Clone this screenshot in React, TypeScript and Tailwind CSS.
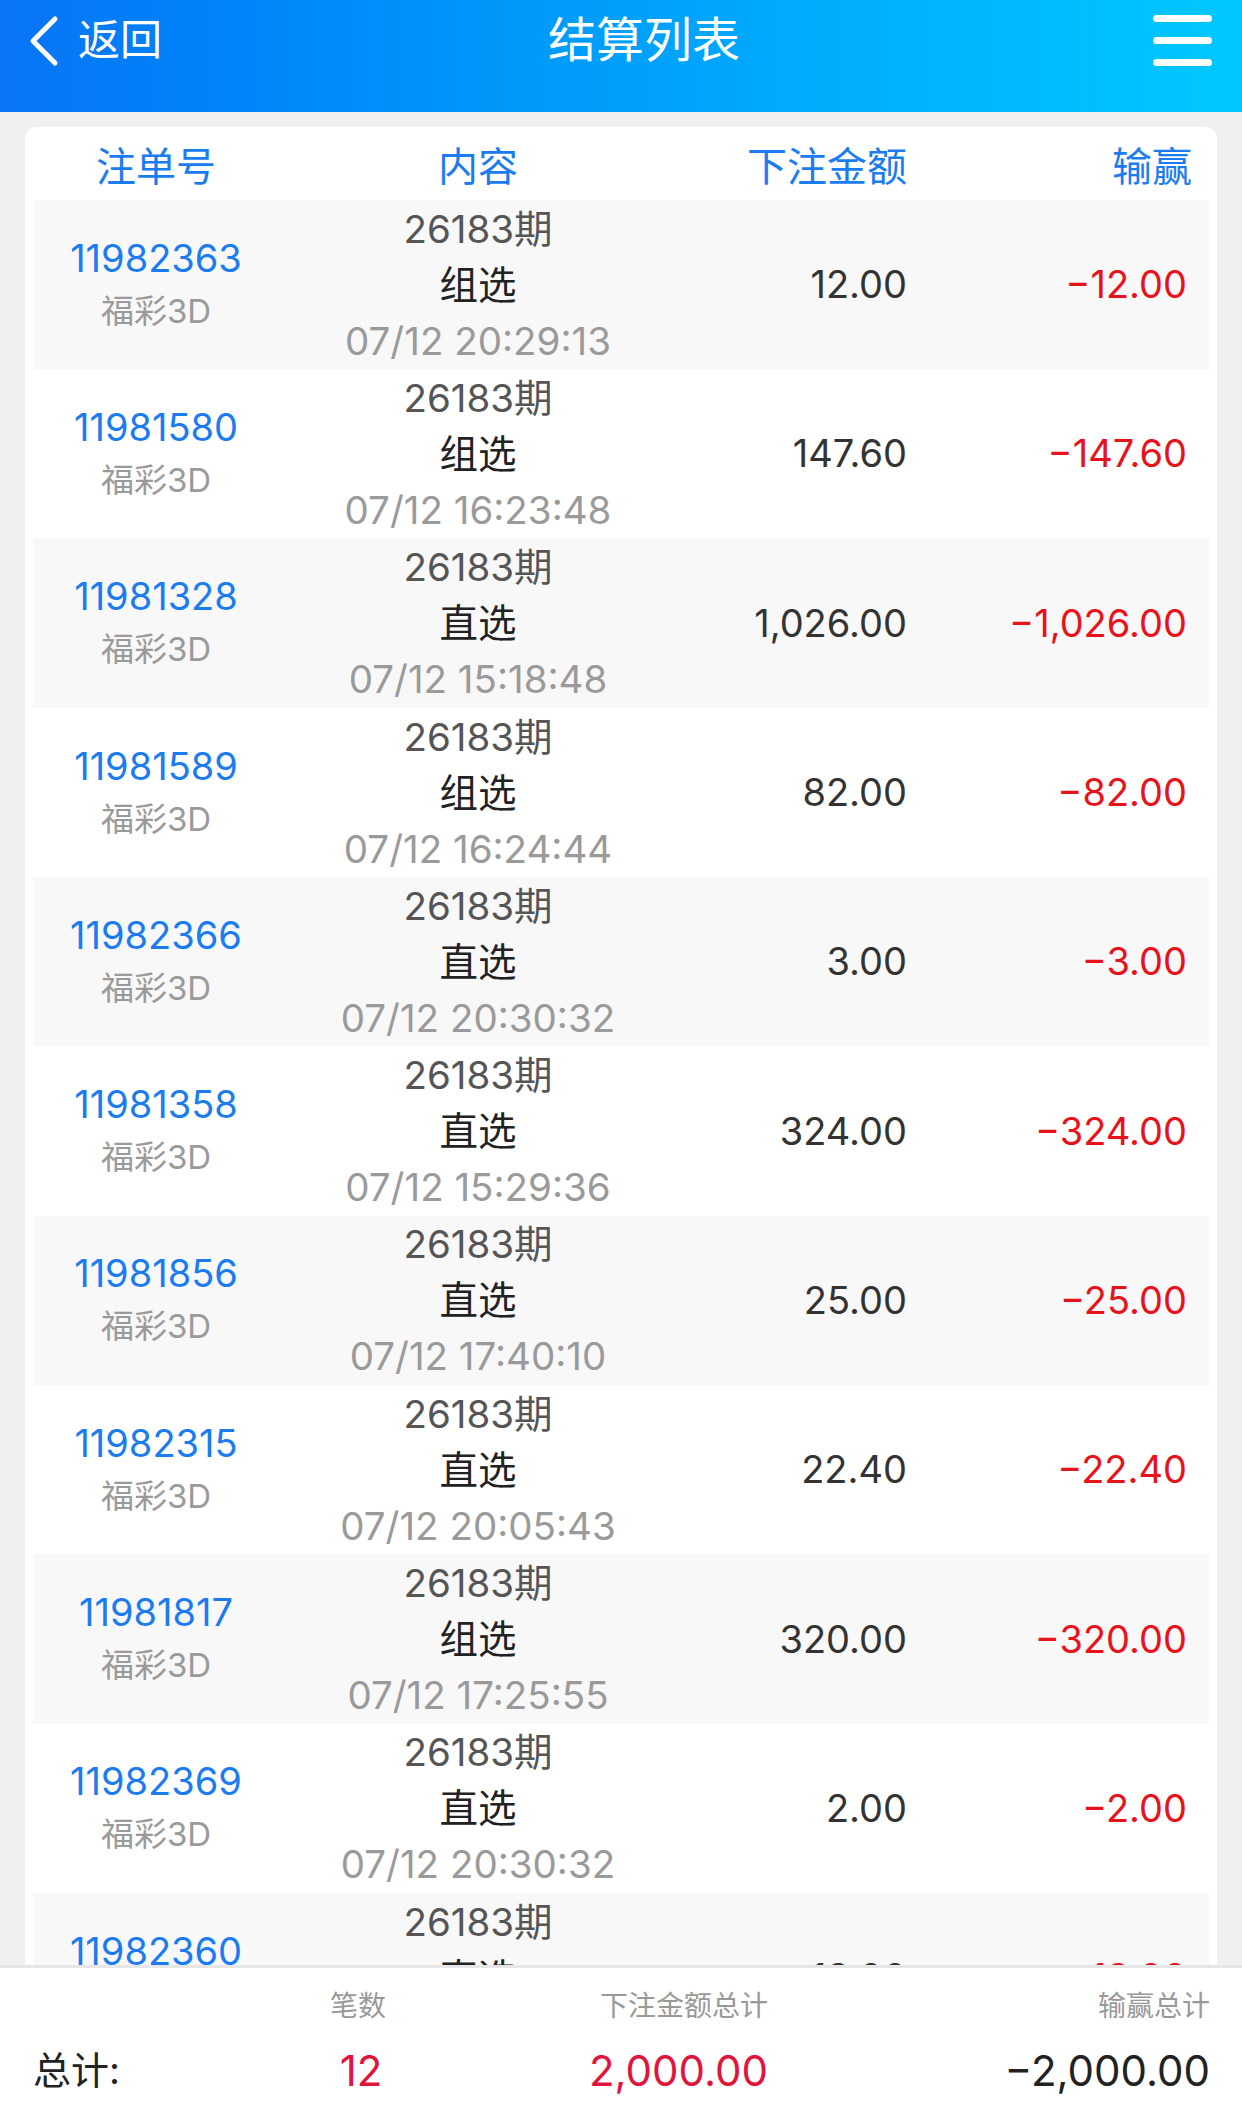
import React from 'react';

const rows = [
  { no: '11982363', play: '组选', time: '07/12 20:29:13', amount: '12.00', win: '−12.00' },
  { no: '11981580', play: '组选', time: '07/12 16:23:48', amount: '147.60', win: '−147.60' },
  { no: '11981328', play: '直选', time: '07/12 15:18:48', amount: '1,026.00', win: '−1,026.00' },
  { no: '11981589', play: '组选', time: '07/12 16:24:44', amount: '82.00', win: '−82.00' },
  { no: '11982366', play: '直选', time: '07/12 20:30:32', amount: '3.00', win: '−3.00' },
  { no: '11981358', play: '直选', time: '07/12 15:29:36', amount: '324.00', win: '−324.00' },
  { no: '11981856', play: '直选', time: '07/12 17:40:10', amount: '25.00', win: '−25.00' },
  { no: '11982315', play: '直选', time: '07/12 20:05:43', amount: '22.40', win: '−22.40' },
  { no: '11981817', play: '组选', time: '07/12 17:25:55', amount: '320.00', win: '−320.00' },
  { no: '11982369', play: '直选', time: '07/12 20:30:32', amount: '2.00', win: '−2.00' },
  { no: '11982360', play: '直选', time: '07/12 20:29:50', amount: '18.00', win: '−18.00' },
];

const font = { fontFamily: 'Inter, "Noto Sans CJK SC", sans-serif' };

export default function App() {
  return (
    <div className="h-[2124px] w-[1242px] flex flex-col overflow-hidden bg-[#f0f0f0]" style={font}>
      {/* Top bar */}
      <header className="h-[112px] shrink-0 bg-gradient-to-r from-[#0a74f6] to-[#00c8ff] text-white">
        <div className="h-[80px] flex items-center pl-[24px] pr-[30px]">
          <div className="flex items-center w-[300px]">
            <svg width="40" height="56" viewBox="0 0 40 56" className="mt-[1px]">
              <path d="M31 6 L9 28 L31 50" fill="none" stroke="white" strokeWidth="5" strokeLinecap="round" strokeLinejoin="round" />
            </svg>
            <span className="ml-[14px] text-[42px] leading-none">返回</span>
          </div>
          <h1 className="flex-1 text-center text-[48px] leading-none pl-[52px]">结算列表</h1>
          <div className="w-[300px] flex justify-end">
            <div className="flex flex-col gap-[15px]">
              <span className="block w-[59px] h-[7px] rounded-full bg-white" />
              <span className="block w-[59px] h-[7px] rounded-full bg-white" />
              <span className="block w-[59px] h-[7px] rounded-full bg-white" />
            </div>
          </div>
        </div>
      </header>

      {/* List */}
      <main className="flex-1 overflow-hidden px-[25px] pt-[15px]">
        <div className="bg-white rounded-t-[12px] px-[8px]">
          <div className="h-[73px] pt-[6px] grid grid-cols-[246px_398px_230px_1fr] items-center pr-[17px] text-[#1a7cf0] text-[40px]">
            <div className="text-center">注单号</div>
            <div className="text-center">内容</div>
            <div className="text-right">下注金额</div>
            <div className="text-right">输赢</div>
          </div>
          {rows.map((r, i) => (
            <div
              key={r.no}
              className={`h-[169.3px] grid grid-cols-[246px_398px_230px_1fr] items-center pr-[22px] ${i % 2 === 0 ? 'bg-[#f8f8f8]' : 'bg-white'}`}
            >
              <div className="flex flex-col items-center text-center">
                <span className="text-[38px] leading-[53px] text-[#1a7cf0]">{r.no}</span>
                <span className="text-[33px] leading-[53px] text-[#9a9a9a]">福彩3D</span>
              </div>
              <div className="flex flex-col items-center text-[38.5px] leading-[56px]">
                <span className="text-[#555]">26183期</span>
                <span className="text-[#222]">{r.play}</span>
                <span className="text-[#9a9a9a]">{r.time}</span>
              </div>
              <div className="text-right text-[38px] text-[#333]">{r.amount}</div>
              <div className="text-right text-[38px] text-[#e8121b]">{r.win}</div>
            </div>
          ))}
        </div>
      </main>

      {/* Totals */}
      <footer className="h-[159px] shrink-0 bg-white border-t-[3px] border-[#e6e6e6] pl-[33px] pr-[32px] pt-[17px]">
        <div className="grid grid-cols-[230px_190px_315px_1fr] h-[40px] items-center text-[28px] text-[#999]">
          <div />
          <div className="text-center">笔数</div>
          <div className="text-right">下注金额总计</div>
          <div className="text-right">输赢总计</div>
        </div>
        <div className="grid grid-cols-[230px_190px_315px_1fr] h-[56px] mt-[14px] items-center text-[42px]">
          <div className="text-[38px] text-[#222]">总计:</div>
          <div className="text-center text-[#e2143c] pl-[6px]">12</div>
          <div className="text-right text-[#e2143c]">2,000.00</div>
          <div className="text-right text-[#222]">−2,000.00</div>
        </div>
      </footer>
    </div>
  );
}
